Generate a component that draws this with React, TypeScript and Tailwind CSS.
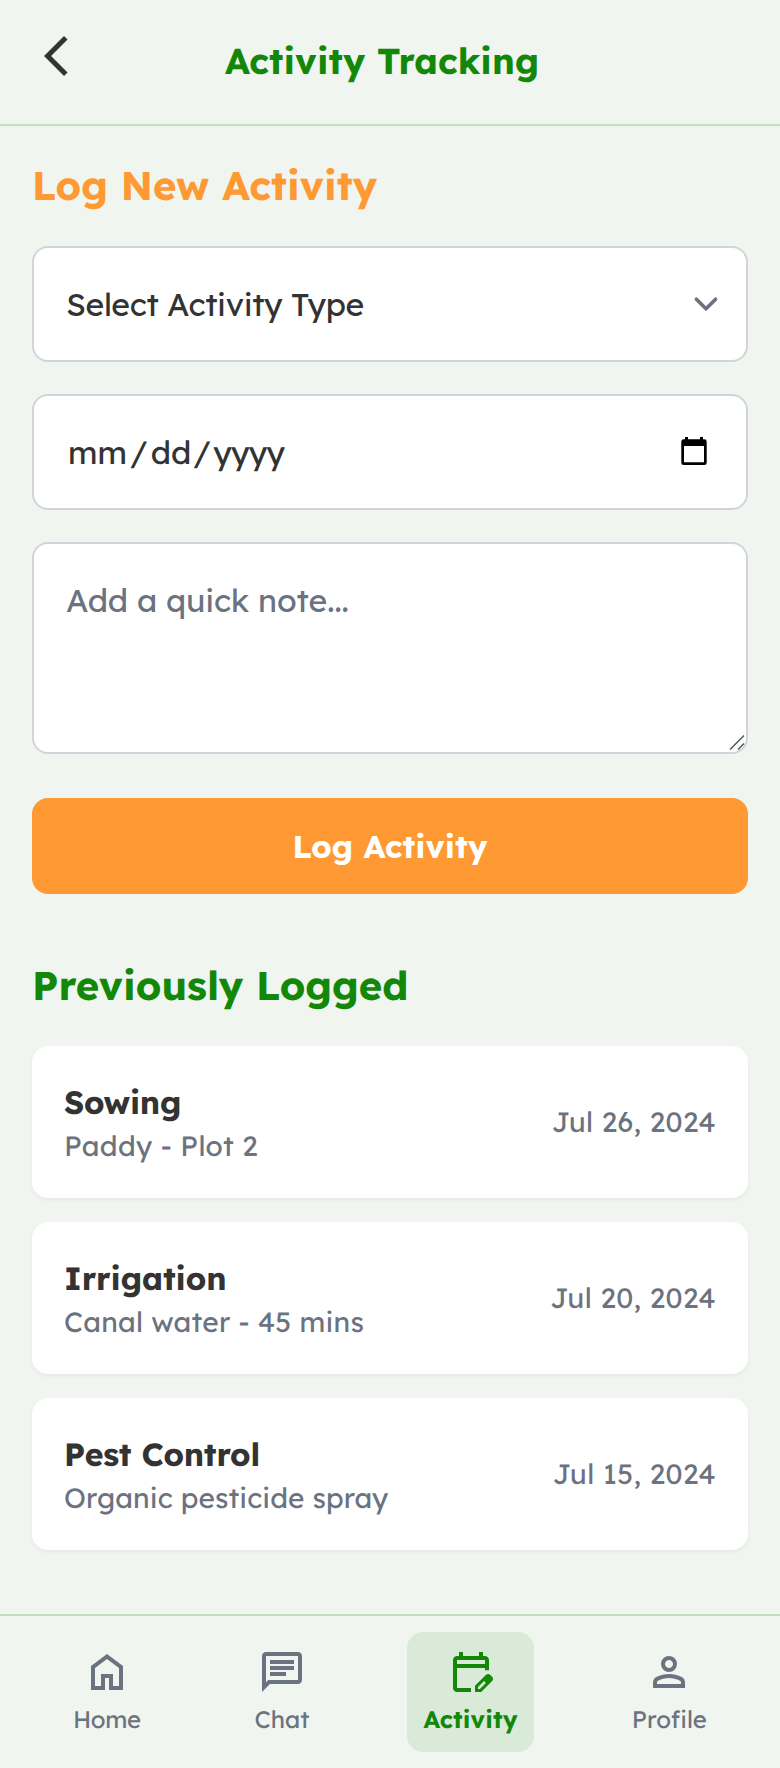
import React from "react";

const ICONS = {
  back: "M640-80 240-480l400-400 71 71-329 329 329 329-71 71Z",
  home: "M240-200h120v-240h240v240h120v-360L480-740 240-560v360Zm-80 80v-480l320-240 320 240v480H520v-240h-80v240H160Z",
  chat: "M240-400h320v-80H240v80Zm0-120h480v-80H240v80Zm0-120h480v-80H240v80ZM80-80v-720q0-33 23.5-56.5T160-880h640q33 0 56.5 23.5T880-800v480q0 33-23.5 56.5T800-240H240L80-80Zm126-240h594v-480H160v525l46-45Zm-46 0v-480 480Z",
  activity:
    "M200-80q-33 0-56.5-23.5T120-160v-560q0-33 23.5-56.5T200-800h40v-80h80v80h320v-80h80v80h40q33 0 56.5 23.5T840-720v203h-80v-43H200v400h280v80H200Zm0-560h560v-80H200v80Zm0 0v-80 80ZM560-80v-123l221-220q9-9 20-13t22-4q12 0 23 4.5t20 13.5l37 37q8 9 12.5 20t4.5 22q0 11-4 22.5T903-300L683-80H560Zm300-263-37-37 37 37ZM620-140h38l121-122-18-19-19-18-122 121v38Zm141-141-19-18 37 37-18-19Z",
  profile:
    "M480-480q-66 0-113-47t-47-113q0-66 47-113t113-47q66 0 113 47t47 113q0 66-47 113t-113 47ZM160-160v-112q0-34 17.5-62.5T224-378q62-31 126-46.5T480-440q66 0 130 15.5T736-378q29 15 46.5 43.5T800-272v112H160Zm80-80h480v-32q0-11-5.5-20T700-306q-54-27-109-40.5T480-360q-56 0-111 13.5T260-306q-9 5-14.5 14t-5.5 20v32Zm240-320q33 0 56.5-23.5T560-640q0-33-23.5-56.5T480-720q-33 0-56.5 23.5T400-640q0 33 23.5 56.5T480-560Zm0-80Zm0 400Z",
};

type IconName = keyof typeof ICONS;

function Icon({ name }: { name: IconName }) {
  return (
    <svg viewBox="0 -960 960 960" className="size-12 shrink-0" fill="currentColor" aria-hidden="true">
      <path d={ICONS[name]} />
    </svg>
  );
}

const entries = [
  {
    title: "Sowing",
    titleTracking: "tracking-[-0.3px]",
    detail: "Paddy - Plot 2",
    detailTracking: "tracking-[0.33px]",
    date: "Jul 26, 2024",
  },
  {
    title: "Irrigation",
    titleTracking: "tracking-[-0.1px]",
    detail: "Canal water - 45 mins",
    detailTracking: "tracking-[0.22px]",
    date: "Jul 20, 2024",
  },
  {
    title: "Pest Control",
    titleTracking: "tracking-[-0.2px]",
    detail: "Organic pesticide spray",
    detailTracking: "tracking-[0.1px]",
    date: "Jul 15, 2024",
  },
];

const tabs: { icon: IconName; label: string; tracking: string; active?: boolean }[] = [
  { icon: "home", label: "Home", tracking: "tracking-[-0.4px]" },
  { icon: "chat", label: "Chat", tracking: "tracking-normal" },
  { icon: "activity", label: "Activity", tracking: "tracking-[0.15px]", active: true },
  { icon: "profile", label: "Profile", tracking: "tracking-[0.1px]" },
];

function Header() {
  return (
    <header className="flex h-[126px] items-start border-b-2 border-[#c4dec5] px-8 pt-8">
      <button className="text-[#333333]" aria-label="Back">
        <Icon name="back" />
      </button>
      <h1 className="flex-1 pt-px pr-16 text-center text-[36px] leading-[56px] font-bold tracking-[0.1px] text-[#138808]">
        Activity Tracking
      </h1>
    </header>
  );
}

function ActivityForm() {
  const field = "block w-full rounded-2xl border-2 border-[#d1d5db] bg-white p-8 text-[32px] leading-[48px] text-[#333333]";
  return (
    <section>
      <h2 className="-mt-px mb-[33px] text-[40px] leading-[56px] font-bold text-[#ff9933]">Log New Activity</h2>
      <div className="flex flex-col gap-8">
        <div className="relative">
          <select className={`${field} h-[116px] appearance-none tracking-[-0.36px]`}>
            <option>Select Activity Type</option>
          </select>
          <svg
            viewBox="0 0 20 20"
            className="pointer-events-none absolute top-[34px] right-[18px] size-12"
            fill="none"
            stroke="#6b7280"
            strokeWidth="1.5"
            strokeLinecap="round"
            strokeLinejoin="round"
          >
            <path d="M6 8l4 4 4-4" />
          </svg>
        </div>
        <div className={`${field} h-[116px]`}>
          <div className="flex items-center">
            <span className="px-0.5">mm</span>
            <span className="mx-px">/</span>
            <span className="px-0.5">dd</span>
            <span>/</span>
            <span className="px-0.5 tracking-[-0.8px]">yyyy</span>
            <svg viewBox="0 0 26 28" className="mr-[7px] mb-[3px] ml-auto h-7 w-[26px]" aria-hidden="true">
              <path
                fill="#000"
                fillRule="evenodd"
                d="M4 0h3v2.3h12V0h3v2.3h1.3Q25.7 2.3 25.7 4.7v21Q25.7 28 23.3 28H2.7Q.3 28 .3 25.7v-21Q.3 2.3 2.7 2.3H4ZM3 9v16.3h20V9Z"
              />
            </svg>
          </div>
        </div>
        <div className="relative">
          <textarea
            rows={3}
            placeholder="Add a quick note..."
            className={`${field} h-[212px] resize-none overflow-hidden tracking-[-0.1px] placeholder:text-[#6b7280]`}
          />
          <svg
            viewBox="0 0 16 16"
            className="pointer-events-none absolute right-[3px] bottom-1 size-4"
            fill="none"
            stroke="#555555"
            strokeWidth="1.5"
          >
            <path d="M1 15.5 15 1.5M9 15.5l6-6" />
          </svg>
        </div>
      </div>
      <button className="mt-11 block h-24 w-full rounded-2xl bg-[#ff9933] text-[32px] leading-[48px] font-bold text-white">
        Log Activity
      </button>
    </section>
  );
}

function History() {
  return (
    <section className="mt-16">
      <h2 className="-mt-px mb-[33px] text-[40px] leading-[56px] font-bold text-[#138808]">Previously Logged</h2>
      <ul className="flex flex-col gap-6">
        {entries.map((entry) => (
          <li
            key={entry.title}
            className="flex items-center justify-between rounded-2xl bg-white p-8 shadow-[0_2px_4px_rgba(0,0,0,0.05)]"
          >
            <div>
              <p className={`text-[32px] leading-[48px] font-bold text-[#333333] ${entry.titleTracking}`}>
                {entry.title}
              </p>
              <p className={`text-[28px] leading-[40px] text-[#6b7280] ${entry.detailTracking}`}>{entry.detail}</p>
            </div>
            <p className="text-[28px] leading-[40px] tracking-[0.43px] text-[#6b7280]">{entry.date}</p>
          </li>
        ))}
      </ul>
    </section>
  );
}

function TabBar() {
  return (
    <nav className="flex h-[154px] justify-around border-t-2 border-[#c0dfc0] p-4">
      {tabs.map((tab) => (
        <a
          key={tab.label}
          className={
            tab.active
              ? "flex h-[120px] flex-col items-center gap-[7px] rounded-2xl bg-[#daead9] p-4 font-bold text-[#138808]"
              : "flex h-[120px] flex-col items-center gap-[7px] p-4 text-[#6b7280]"
          }
        >
          <Icon name={tab.icon} />
          <span className={`text-[24px] leading-[32px] ${tab.tracking}`}>{tab.label}</span>
        </a>
      ))}
    </nav>
  );
}

export default function App() {
  return (
    <div className="flex h-[1768px] w-[780px] flex-col overflow-hidden bg-[#f0f5ef] font-[Lexend,Lato,sans-serif] font-normal [text-rendering:geometricPrecision]">
      <Header />
      <main className="flex-1 p-8">
        <ActivityForm />
        <History />
      </main>
      <TabBar />
    </div>
  );
}
